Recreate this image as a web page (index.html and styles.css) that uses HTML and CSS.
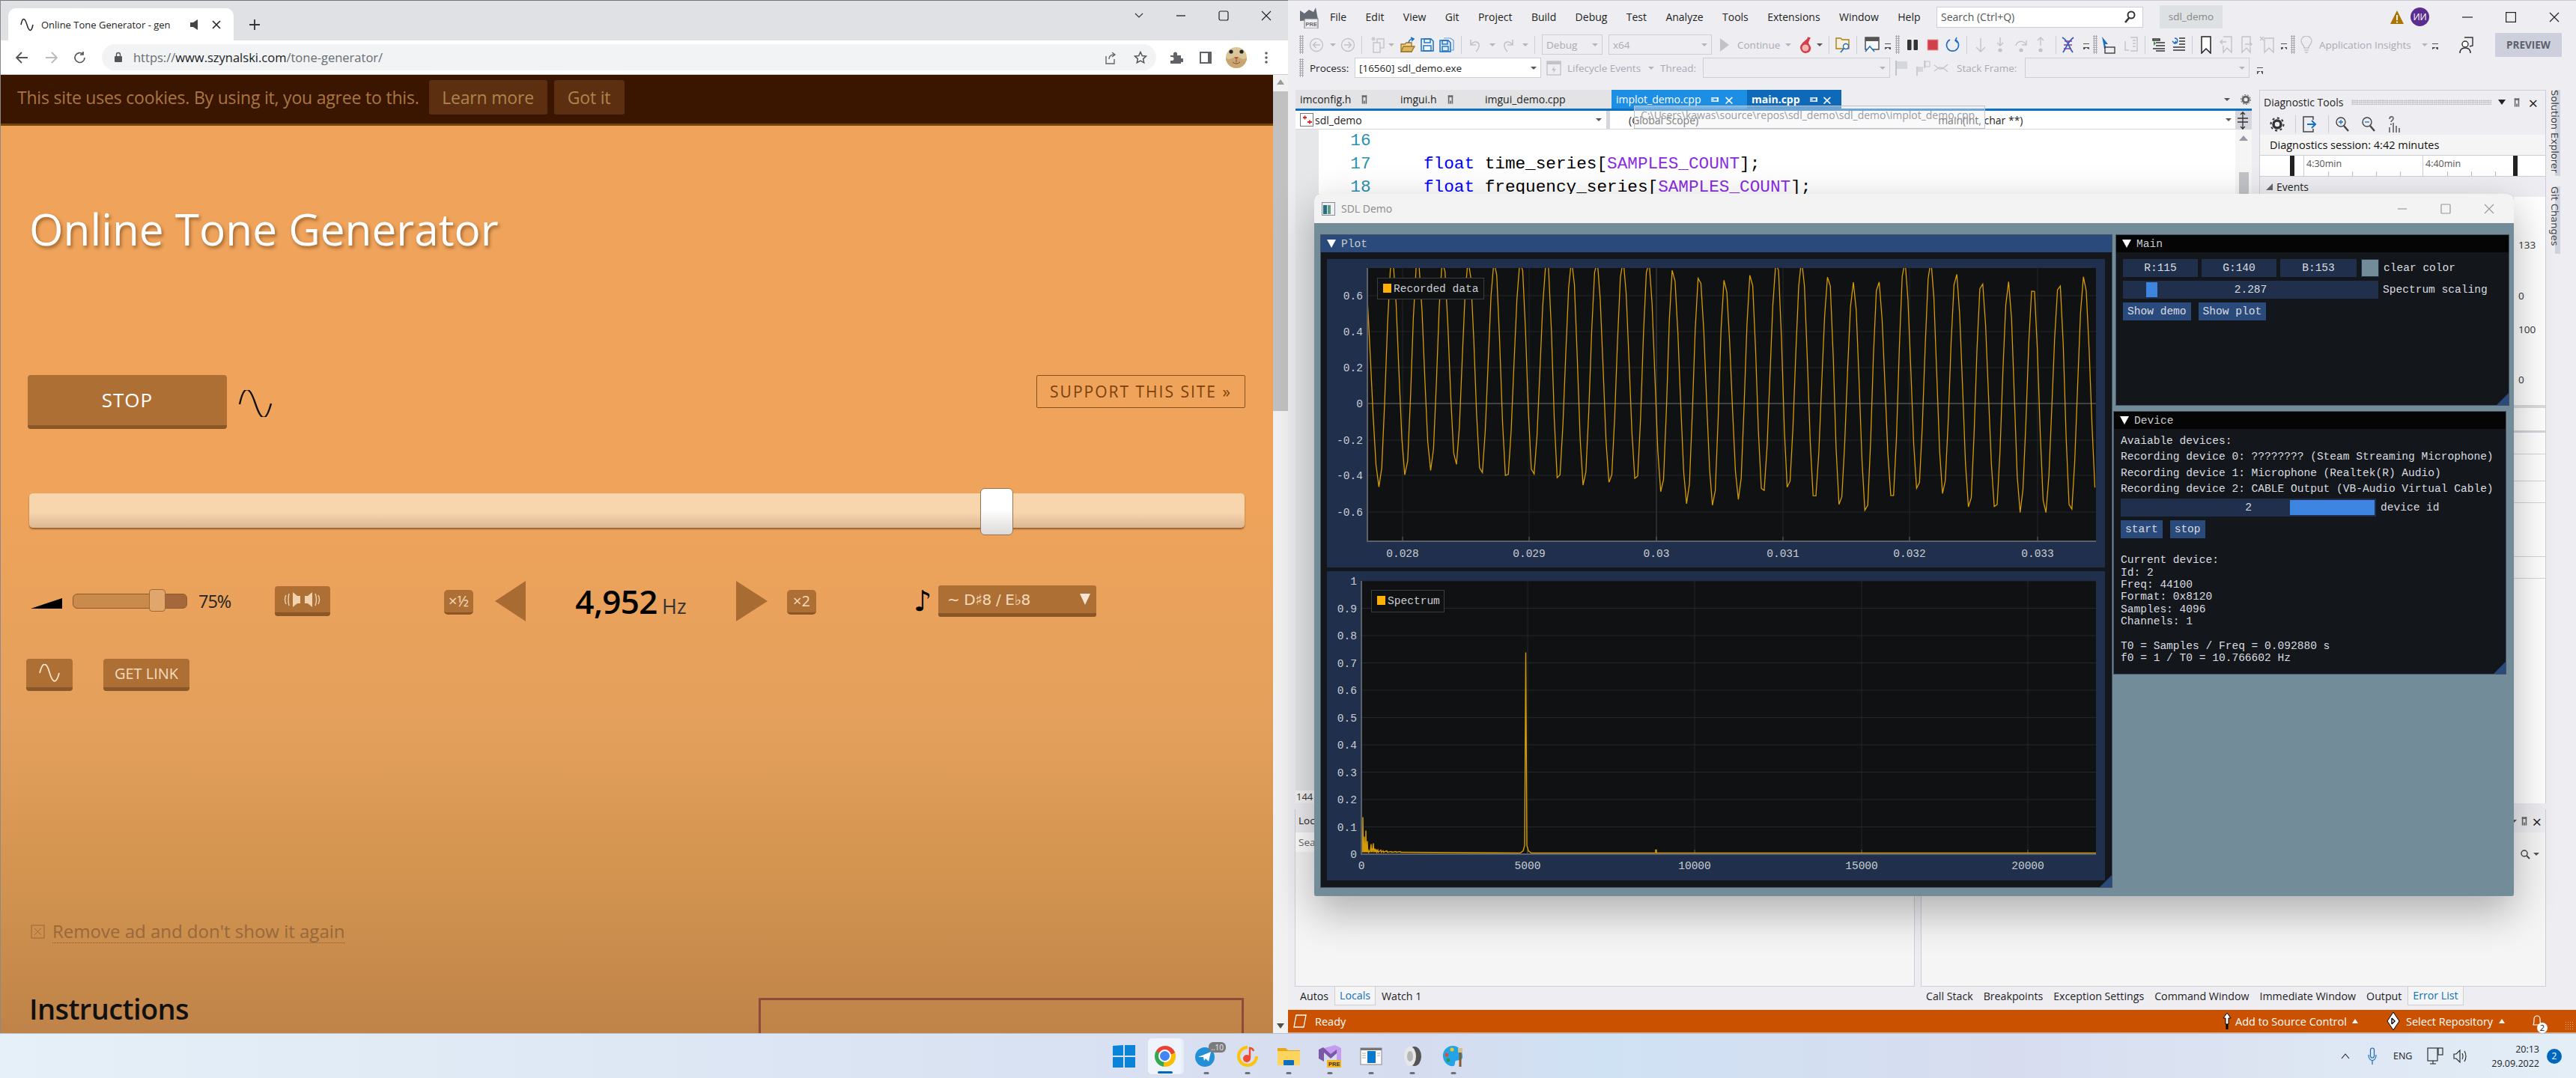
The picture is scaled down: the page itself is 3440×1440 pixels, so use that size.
FILE: index.html
```html
<!DOCTYPE html>
<html lang="en">
<head>
    <meta charset="UTF-8">
    <title>Tone generator and SDL demo</title>
    <link rel="stylesheet" href="styles.css">
</head>
<body>

<div class="windows">

    <!-- browser -->
    <section class="chrome">
        <div class="tabstrip">
            <div class="tab">
                <svg width="18" height="20" viewBox="0 0 18 20"><path d="M1 10C3 0 6 0 9 10S15 20 17 10" fill="none" stroke="#222" stroke-width="1.5"/></svg>
                <span class="tab-title">Online Tone Generator - gen</span>
                <svg class="tab-spk" width="14" height="16" viewBox="0 0 14 16"><path d="M1 5h4l6-4v14l-6-4H1z" fill="#444"/></svg>
                <svg class="tab-x" width="12" height="12" viewBox="0 0 12 12"><path d="M1 1l10 10M11 1L1 11" stroke="#222" stroke-width="1.6"/></svg>
            </div>
            <svg class="tab-new" width="14" height="14" viewBox="0 0 14 14"><path d="M7 0v14M0 7h14" stroke="#333" stroke-width="1.8"/></svg>
            <div class="winbtns">
                <svg width="12" height="10" viewBox="0 0 12 10"><path d="M1 2l5 5 5-5" fill="none" stroke="#333" stroke-width="1.2"/></svg>
                <svg width="14" height="14" viewBox="0 0 14 14"><path d="M1 7h12" stroke="#111" stroke-width="1.2"/></svg>
                <svg width="14" height="14" viewBox="0 0 14 14"><rect x="1" y="1" width="12" height="12" rx="2" fill="none" stroke="#222" stroke-width="1.2"/></svg>
                <svg width="14" height="14" viewBox="0 0 14 14"><path d="M1 1l12 12M13 1L1 13" stroke="#222" stroke-width="1.1"/></svg>
            </div>
        </div>
        <div class="addressbar">
            <svg width="18" height="16" viewBox="0 0 18 16"><path d="M17 8H3M9 1L2 8l7 7" fill="none" stroke="#555" stroke-width="1.8"/></svg>
            <svg class="ab-fwd" width="18" height="16" viewBox="0 0 18 16"><path d="M1 8h14M9 1l7 7-7 7" fill="none" stroke="#bbb" stroke-width="1.8"/></svg>
            <svg class="ab-reload" width="18" height="18" viewBox="0 0 18 18"><path d="M15 9a6.500 6.500 0 1 1-2-4.700M13 1v4h-4" fill="none" stroke="#555" stroke-width="1.7"/></svg>
            <div class="omnibox">
                <svg width="12" height="15" viewBox="0 0 12 15"><rect x="1" y="6" width="10" height="8" rx="1" fill="#555"/><path d="M3.500 6V4a2.500 2.500 0 0 1 5 0v2" fill="none" stroke="#555" stroke-width="1.4"/></svg>
                <span class="url"><span class="url-dim">https://</span>www.szynalski.com<span class="url-dim">/tone-generator/</span></span>
                <svg class="om-share" width="18" height="18" viewBox="0 0 18 18"><path d="M3 7v10h11V11M7 11c0-4 3-6 7-6M11 2l4 3-4 3" fill="none" stroke="#666" stroke-width="1.4"/></svg>
                <svg class="om-star" width="18" height="18" viewBox="0 0 18 18"><path d="M9 1.500l2.300 5 5.200.6-3.900 3.500 1.100 5.200L9 13.200l-4.700 2.600 1.100-5.200L1.500 7.100l5.200-.6z" fill="none" stroke="#555" stroke-width="1.5"/></svg>
            </div>
            <svg class="ab-ext" width="18" height="18" viewBox="0 0 18 18"><path d="M1 6h4V4a2.500 2.500 0 0 1 5 0v2h5v4h2a2.500 2.500 0 0 1 0 5h-2v2H1v-4h2a2.500 2.500 0 0 0 0-5H1z" fill="#5f6368"/></svg>
            <svg class="ab-side" width="18" height="18" viewBox="0 0 18 18"><rect x="1" y="1" width="16" height="16" fill="#5f6368"/><rect x="3" y="3" width="9" height="12" fill="#fff"/></svg>
            <svg class="ab-avatar" width="28" height="28" viewBox="0 0 28 28"><circle cx="14" cy="14" r="14" fill="#dcc598"/><path d="M0 14a14 14 0 0 0 28 0c-5 5-9-1-14-1S5 19 0 14z" fill="#c7a66f"/><circle cx="7" cy="6" r="2.600" fill="#1c2530"/><circle cx="21" cy="6" r="2.600" fill="#1c2530"/><path d="M11 13h6l-3 4z" fill="#b8574e"/><path d="M14 17v3M9 20q5 4 10 0" fill="none" stroke="#8a4a3c"/></svg>
            <svg class="ab-dots" width="6" height="18" viewBox="0 0 6 18"><circle cx="3" cy="3" r="1.800" fill="#5f6368"/><circle cx="3" cy="9" r="1.800" fill="#5f6368"/><circle cx="3" cy="15" r="1.800" fill="#5f6368"/></svg>
        </div>

        <div class="viewport">
            <main class="site">
                <div class="cookies">
                    <span>This site uses cookies. By using it, you agree to this.</span>
                    <a class="cookie-btn cb-learn">Learn more</a>
                    <a class="cookie-btn cb-got">Got it</a>
                </div>
                <h1 class="site-title">Online Tone Generator</h1>

                <div class="row-play">
                    <button class="bbtn stop">STOP</button>
                    <svg class="wave-icon" width="46" height="36" viewBox="0 0 46 36"><path d="M2 19C8-8 15-6 23 18S37 44 44 18" fill="none" stroke="#111" stroke-width="2.400"/></svg>
                    <a class="support">SUPPORT THIS SITE »</a>
                </div>

                <div class="freq-slider"><div class="freq-thumb"></div></div>

                <div class="row-controls">
                    <svg class="vol-ramp" width="42" height="14" viewBox="0 0 42 14"><path d="M0 14L42 0v14z" fill="#000"/></svg>
                    <div class="vol-slider"><div class="vol-thumb"></div></div>
                    <span class="vol-pct">75%</span>
                    <button class="bbtn mute">
                        <svg width="50" height="24" viewBox="0 0 50 24"><path d="M3 6q-3 6 0 12M7 4q-2 8 0 16" fill="none" stroke="#f0d2ae" stroke-width="1.400"/><path d="M22 7h-4l-6-5v20l6-5h4z" fill="#f0d2ae"/><path d="M28 7h4l6-5v20l-6-5h-4z" fill="#f0d2ae"/><path d="M42 4q3 8 0 16M46 6q3 6 0 12" fill="none" stroke="#f0d2ae" stroke-width="1.400"/></svg>
                    </button>
                    <button class="bbtn tiny half">×½</button>
                    <svg class="tri-left" width="41" height="54" viewBox="0 0 41 54"><path d="M41 0v54L0 27z" fill="#a86c33"/></svg>
                    <div class="freq-value"><b>4,952</b> <span>Hz</span></div>
                    <svg class="tri-right" width="42" height="54" viewBox="0 0 42 54"><path d="M0 0v54l42-27z" fill="#a86c33"/></svg>
                    <button class="bbtn tiny dbl">×2</button>
                    <span class="note-icon">♪</span>
                    <div class="bbtn note-select"><span>~ D♯8 / E♭8</span><i class="sel-arrow"></i></div>
                </div>

                <div class="row-tools">
                    <button class="bbtn tool-wave">
                        <svg width="30" height="24" viewBox="0 0 30 24"><path d="M2 12C6-4 11-3 15 11S24 28 28 12" fill="none" stroke="#fbe3c6" stroke-width="1.800"/></svg>
                    </button>
                    <button class="bbtn tool-link">GET LINK</button>
                </div>

                <div class="remove-ad">
                    <svg width="19" height="19" viewBox="0 0 19 19"><rect x="1" y="1" width="17" height="17" fill="none" stroke="#96683b"/><path d="M5 5l9 9M14 5l-9 9" stroke="#96683b"/></svg>
                    <span>Remove ad and don't show it again</span>
                </div>

                <div class="row-instr">
                    <h2>Instructions</h2>
                    <div class="ad-box"></div>
                </div>
            </main>
            <div class="scrollbar">
                <i class="sb-up"></i>
                <div class="sb-thumb"></div>
                <i class="sb-down"></i>
            </div>
        </div>
    </section>

    <!-- visual studio -->
    <section class="vs">
        <div class="vs-menu">
            <svg class="vs-logo" width="26" height="30" viewBox="0 0 26 30"><path d="M1 20V6l6 4 6-5 6 3 3-6 3 16z" fill="#656a75"/><rect x="7" y="17" width="18" height="13" fill="#eeeef2" stroke="#777"/><text x="8.500" y="27" font-size="7.500" font-family="Liberation Sans, sans-serif" font-weight="700" fill="#666">PRE</text></svg>
            <nav class="menu-items">
                <span>File</span><span>Edit</span><span>View</span><span>Git</span><span>Project</span><span>Build</span><span>Debug</span><span>Test</span><span>Analyze</span><span>Tools</span><span>Extensions</span><span>Window</span><span>Help</span>
            </nav>
            <div class="vs-search">
                <span>Search (Ctrl+Q)</span>
                <svg width="18" height="18" viewBox="0 0 18 18"><circle cx="11" cy="6" r="4.500" fill="none" stroke="#333" stroke-width="2"/><path d="M8 10l-5 6" stroke="#333" stroke-width="2.600"/></svg>
            </div>
            <div class="vs-project">sdl_demo</div>
            <svg class="vs-warn" width="18" height="18" viewBox="0 0 18 18"><path d="M9 0l9 18H0z" fill="#a97500"/><path d="M9 6v7M9 14.500v2" stroke="#fff" stroke-width="1.800"/></svg>
            <div class="vs-avatar">ИИ</div>
            <div class="vs-winbtns">
                <svg width="14" height="14" viewBox="0 0 14 14"><path d="M0 7h14" stroke="#222" stroke-width="1.200"/></svg>
                <svg width="14" height="14" viewBox="0 0 14 14"><rect x=".6" y=".6" width="12.800" height="12.800" fill="none" stroke="#222" stroke-width="1.200"/></svg>
                <svg width="14" height="14" viewBox="0 0 14 14"><path d="M1 1l12 12M13 1L1 13" stroke="#222" stroke-width="1.200"/></svg>
            </div>
        </div>

        <div class="tb tb-one">
            <i class="grip"></i>
            <svg class="m7" width="20" height="20" viewBox="0 0 20 20"><circle cx="10" cy="10" r="8.500" fill="none" stroke="#c2c3c9" stroke-width="1.400"/><path d="M15 10H6M9.500 6L5.500 10l4 4" fill="none" stroke="#c2c3c9" stroke-width="1.400"/></svg>
            <i class="caret m8"></i>
            <svg class="m6" width="20" height="20" viewBox="0 0 20 20"><circle cx="10" cy="10" r="8.500" fill="none" stroke="#c2c3c9" stroke-width="1.400"/><path d="M5 10h9M10.500 6l4 4-4 4" fill="none" stroke="#c2c3c9" stroke-width="1.400"/></svg>
            <i class="sep m8"></i>
            <svg class="m11" width="20" height="24" viewBox="0 0 20 24"><path d="M4 1v6M1 4h6M2 2l4 4M6 2L2 6" stroke="#c2c3c9"/><rect x="9" y="4" width="9" height="12" fill="none" stroke="#c2c3c9" stroke-width="1.400"/><rect x="4" y="9" width="9" height="13" fill="#eeeef2" stroke="#c2c3c9" stroke-width="1.400"/></svg>
            <i class="caret m4"></i>
            <svg class="m8" width="20" height="22" viewBox="0 0 20 22"><path d="M1 10h5l2-2h7v12H1z" fill="#f2d58e" stroke="#9d7424" stroke-width="1.300"/><path d="M1 20l3-7h15l-4 7z" fill="#dcb660" stroke="#9d7424" stroke-width="1.300"/><path d="M11 8q1-5 6-5M14 1l4 2-3 3" fill="none" stroke="#1c6ebf" stroke-width="1.500"/></svg>
            <svg class="m6" width="20" height="20" viewBox="0 0 20 20"><path d="M2 2h13l3 3v13H2z" fill="#eef3fa" stroke="#1b6fc2" stroke-width="1.500"/><rect x="6" y="2" width="8" height="5" fill="none" stroke="#1b6fc2" stroke-width="1.400"/><rect x="5" y="11" width="10" height="7" fill="none" stroke="#1b6fc2" stroke-width="1.400"/></svg>
            <svg class="m6" width="20" height="20" viewBox="0 0 20 20"><path d="M6 1h9l4 3v13h-3" fill="none" stroke="#6a9cd8" stroke-width="1.200"/><path d="M1 4h11l3 3v12H1z" fill="#dde9f7" stroke="#1b6fc2" stroke-width="1.500"/><rect x="4" y="4" width="7" height="5" fill="none" stroke="#1b6fc2" stroke-width="1.400"/><rect x="4" y="12" width="8" height="6" fill="none" stroke="#1b6fc2" stroke-width="1.400"/></svg>
            <i class="sep m9"></i>
            <svg class="m8" width="20" height="20" viewBox="0 0 20 20"><path d="M4 3v7h7M4.500 10C8 4 16 5 15 12c-.4 3-2 5-4 7" fill="none" stroke="#c2c3c9" stroke-width="1.600"/></svg>
            <i class="caret m9"></i>
            <svg class="m7" width="20" height="20" viewBox="0 0 20 20"><path d="M16 3v7H9M15.500 10C12 4 4 5 5 12c.4 3 2 5 4 7" fill="none" stroke="#c2c3c9" stroke-width="1.600"/></svg>
            <i class="caret m9"></i>
            <i class="sep m8"></i>
            <div class="combo cb-debug m9"><span>Debug</span><i class="caret"></i></div>
            <div class="combo cb-x64 m8"><span>x64</span><i class="caret"></i></div>
            <svg class="m10" width="14" height="20" viewBox="0 0 14 20"><path d="M1 1v18l12-9z" fill="#c2c3c9"/></svg>
            <span class="tb-txt dim w58 m10">Continue</span>
            <i class="caret m6"></i>
            <svg class="m9" width="20" height="24" viewBox="0 0 20 24"><path d="M13 1c1 4-9 7-10 14 0 4 3 8 7 8s8-3 7-8c-1-3-2-3-3-6 1-3 2-5 3-7-2 0-3 0-4-1z" fill="#d13f4a"/><circle cx="10" cy="16" r="4.500" fill="#f6b5b0"/></svg>
            <i class="caret dark m5"></i>
            <i class="sep m8"></i>
            <svg class="m8" width="20" height="22" viewBox="0 0 20 22"><path d="M1 2h6l2 2h9v12H1z" fill="#f7f0dd" stroke="#a97a1a" stroke-width="1.400"/><circle cx="14" cy="13" r="3.500" fill="#fff" stroke="#1b6fc2" stroke-width="1.400"/><path d="M11 16l-4 5" stroke="#1b6fc2" stroke-width="1.600"/></svg>
            <i class="sep m8"></i>
            <svg class="m10" width="20" height="22" viewBox="0 0 20 22"><rect x="1" y="1" width="18" height="16" fill="#f8f8f8" stroke="#444" stroke-width="1.400"/><rect x="1" y="1" width="18" height="5" fill="#555"/><path d="M1 20l6-7 6 7" fill="#fff" stroke="#1b6fc2" stroke-width="1.500"/></svg>
            <i class="overflow m7"></i>
            <i class="grip m6"></i>
            <svg class="m7" width="20" height="20" viewBox="0 0 20 20"><rect x="3" y="3" width="5.500" height="14" rx="1" fill="#333"/><rect x="11.500" y="3" width="5.500" height="14" rx="1" fill="#333"/></svg>
            <svg class="m7" width="20" height="20" viewBox="0 0 20 20"><rect x="3" y="3" width="14" height="14" fill="#d13f4a" stroke="#e79aa0"/></svg>
            <svg class="m7" width="20" height="22" viewBox="0 0 20 22"><path d="M13 4a8 8 0 1 1-7 0" fill="none" stroke="#1b6fc2" stroke-width="1.700"/><path d="M15 1l-2 4 3 3" fill="none" stroke="#1b6fc2" stroke-width="1.500"/></svg>
            <i class="sep m8"></i>
            <svg class="m8" width="20" height="22" viewBox="0 0 20 22"><path d="M10 2v18M4 14l6 6 6-6" fill="none" stroke="#c2c3c9" stroke-width="1.400"/></svg>
            <svg class="m6" width="20" height="22" viewBox="0 0 20 22"><path d="M10 1v11M6 8l4 4 4-4" fill="none" stroke="#c2c3c9" stroke-width="1.400"/><circle cx="10" cy="18" r="2.600" fill="#c2c3c9"/></svg>
            <svg class="m8" width="20" height="22" viewBox="0 0 20 22"><path d="M3 12a7 7 0 0 1 13-2M17 5v6h-6" fill="none" stroke="#c2c3c9" stroke-width="1.400"/><circle cx="10" cy="18" r="2.600" fill="#c2c3c9"/></svg>
            <svg class="m6" width="20" height="22" viewBox="0 0 20 22"><path d="M10 12V1M6 5l4-4 4 4" fill="none" stroke="#c2c3c9" stroke-width="1.400"/><circle cx="10" cy="18" r="2.600" fill="#c2c3c9"/></svg>
            <i class="sep m10"></i>
            <svg class="m6" width="20" height="24" viewBox="0 0 20 24"><path d="M2 2c8 4 8 12 14 20M17 2C10 7 8 14 3 22" fill="none" stroke="#2f5fb5" stroke-width="1.800"/><path d="M5 7h10M4 12h11M4 17h10" stroke="#7a3fb0" stroke-width="1.400"/></svg>
            <i class="overflow m10"></i>
            <i class="grip m5"></i>
            <svg class="m4" width="20" height="24" viewBox="0 0 20 24"><path d="M2 1l8 10-4 0 2 6-3 0-1-6z" fill="#1b6fc2"/><rect x="6" y="15" width="13" height="8" fill="#eee" stroke="#333" stroke-width="1.300"/></svg>
            <svg class="m11" width="20" height="22" viewBox="0 0 20 22"><path d="M9 1h9v18h-9M2 6v12h5M12 5h4M12 9h4M12 13h4" fill="none" stroke="#c2c3c9" stroke-width="1.400"/></svg>
            <i class="sep m8"></i>
            <svg class="m9" width="20" height="20" viewBox="0 0 20 20"><path d="M1 2h9v2H1zM5 7h12M5 11h12M1 15h16M5 18h12" fill="none" stroke="#333" stroke-width="1.500"/><path d="M2 5l3 3-3 3" fill="#2a8c3c"/></svg>
            <svg class="m5" width="20" height="22" viewBox="0 0 20 22"><path d="M11 2h8M11 6h8M11 10h8M3 14h16M3 18h16" stroke="#333" stroke-width="1.500"/><path d="M5 2c5 0 5 7 0 7l2-3M5 9L2 6" fill="none" stroke="#1b6fc2" stroke-width="1.500"/></svg>
            <i class="sep m8"></i>
            <svg class="m8" width="20" height="24" viewBox="0 0 20 24"><path d="M4 1h12v22l-6-6-6 6z" fill="#fff" stroke="#222" stroke-width="1.500"/></svg>
            <svg class="m7" width="20" height="24" viewBox="0 0 20 24"><path d="M6 1h11v21l-6-6-5 6V13M2 8h8M5 5L2 8l3 3" fill="none" stroke="#c2c3c9" stroke-width="1.400"/></svg>
            <svg class="m7" width="20" height="24" viewBox="0 0 20 24"><path d="M4 1h11v10M15 15v7l-5-6-6 6V1M8 11h9M14 8l3 3-3 3" fill="none" stroke="#c2c3c9" stroke-width="1.400"/></svg>
            <svg class="m7" width="20" height="24" viewBox="0 0 20 24"><path d="M7 3h12v19l-6-6-6 6zM1 1l5 5M6 1L1 6" fill="none" stroke="#c2c3c9" stroke-width="1.400"/></svg>
            <i class="overflow m9"></i>
            <i class="grip m5"></i>
            <svg class="m7" width="16" height="24" viewBox="0 0 16 24"><path d="M5 16c0-4-4-5-4-9a7 7 0 0 1 14 0c0 4-4 5-4 9zM5 19h6M6 22h4" fill="none" stroke="#c2c3c9" stroke-width="1.400"/></svg>
            <span class="tb-txt dim w131 m9">Application Insights</span>
            <i class="caret m6"></i>
            <i class="overflow m6"></i>
            <svg class="m27" width="20" height="24" viewBox="0 0 20 24"><circle cx="9" cy="11" r="4" fill="#fff" stroke="#333" stroke-width="1.400"/><path d="M2 23c0-5 3-7 7-7s7 2 7 7" fill="none" stroke="#333" stroke-width="1.500"/><path d="M8 2h11v11l-4 1" fill="none" stroke="#333" stroke-width="1.400"/></svg>
            <div class="preview m29">PREVIEW</div>
        </div>

        <div class="tb tb-two">
            <i class="grip"></i>
            <span class="tb-txt w52 m8">Process:</span>
            <div class="combo cb-process m8"><span>[16560] sdl_demo.exe</span><i class="caret dark"></i></div>
            <svg class="m7" width="20" height="20" viewBox="0 0 20 20"><rect x="1" y="1" width="18" height="18" fill="none" stroke="#c2c3c9" stroke-width="1.400"/><rect x="1" y="1" width="18" height="4" fill="#c2c3c9"/><path d="M11 7l-4 6h3l-1 4 4-6h-3z" fill="#c2c3c9"/></svg>
            <span class="tb-txt dim w102 m8">Lifecycle Events</span>
            <i class="caret m6"></i>
            <span class="tb-txt dim w49 m8">Thread:</span>
            <div class="combo cb-thread m8"><i class="caret"></i></div>
            <svg class="m6" width="20" height="22" viewBox="0 0 20 22"><path d="M2 1v20" stroke="#c2c3c9" stroke-width="2"/><path d="M3 2h14v10H3z" fill="#d6d7dc"/></svg>
            <svg class="m8" width="20" height="22" viewBox="0 0 20 22"><path d="M2 9v12M12 1v10" stroke="#c2c3c9" stroke-width="1.600"/><rect x="3" y="9" width="7" height="7" fill="#d6d7dc"/><rect x="13" y="2" width="6" height="7" fill="none" stroke="#c2c3c9"/></svg>
            <svg class="m4" width="20" height="22" viewBox="0 0 20 22"><path d="M1 7l7 5q4 1 11-6M1 15l7-5q4-1 11 6" fill="none" stroke="#c2c3c9" stroke-width="1.300"/></svg>
            <span class="tb-txt dim w83 m11">Stack Frame:</span>
            <div class="combo cb-frame m8"><i class="caret"></i></div>
            <i class="overflow low m10"></i>
        </div>

        <div class="vs-main">
            <div class="vs-panes">
                <div class="vs-top">

                    <div class="editor">
                        <div class="doc-tabs">
                            <div class="doc-tab dt-a">imconfig.h<i class="pin"></i></div>
                            <div class="doc-tab dt-b">imgui.h<i class="pin"></i></div>
                            <div class="doc-tab dt-c">imgui_demo.cpp</div>
                            <div class="doc-tab dt-open">implot_demo.cpp<i class="pin white"></i><b class="xmark">×</b></div>
                            <div class="doc-tab dt-main"><strong>main.cpp</strong><i class="pin white"></i><b class="xmark">×</b></div>
                            <div class="doc-tail">
                                <i class="caret dark"></i>
                                <svg width="14" height="14" viewBox="0 0 14 14"><circle cx="7" cy="7" r="4" fill="none" stroke="#666" stroke-width="3"/><circle cx="7" cy="7" r="6.500" fill="none" stroke="#666" stroke-dasharray="2 2"/></svg>
                            </div>
                        </div>
                        <div class="nav-bar">
                            <div class="nav-drop nd-project">
                                <svg width="18" height="18" viewBox="0 0 18 18"><rect x=".5" y=".5" width="17" height="17" fill="#fff" stroke="#777"/><path d="M4 6h5M6.500 3.500v5M10 12h6M13 9.500v5" stroke="#d03030" stroke-width="1.800"/></svg>
                                <span>sdl_demo</span>
                                <i class="caret dark"></i>
                            </div>
                            <div class="nav-drop nd-scope">
                                <span>(Global Scope)</span>
                                <span class="nd-fn">main(int, char **)</span>
                                <i class="caret dark"></i>
                            </div>
                            <svg class="nav-split" width="16" height="26" viewBox="0 0 16 26"><path d="M8 1v24M1 10h14M1 15h14M5 5l3-3 3 3M5 21l3 3 3-3" fill="none" stroke="#333" stroke-width="1.300"/></svg>
                        </div>
                        <div class="code-pane">
                            <div class="code-margin"></div>
                            <div class="code">
                                <div class="ln"><span class="no">16</span></div>
                                <div class="ln"><span class="no">17</span>    <span class="kw">float</span> time_series[<span class="mac">SAMPLES_COUNT</span>];</div>
                                <div class="ln"><span class="no">18</span>    <span class="kw">float</span> frequency_series[<span class="mac">SAMPLES_COUNT</span>];</div>
                            </div>
                            <div class="code-scroll"><i class="up-arrow"></i><div class="code-thumb"></div></div>
                        </div>
                        <div class="zoom-strip">144 %</div>
                    </div>

                    <aside class="diag">
                        <div class="diag-head">
                            <span>Diagnostic Tools</span>
                            <i class="dots"></i>
                            <i class="caret dark big"></i>
                            <i class="pin"></i>
                            <b class="xmark dark">×</b>
                        </div>
                        <div class="diag-tools">
                            <svg width="20" height="20" viewBox="0 0 20 20"><circle cx="10" cy="10" r="5" fill="none" stroke="#333" stroke-width="3.500"/><circle cx="10" cy="10" r="8.500" fill="none" stroke="#333" stroke-width="2" stroke-dasharray="3 3.600"/></svg>
                            <i class="sep"></i>
                            <svg width="20" height="24" viewBox="0 0 20 24"><path d="M15 6V2H2v20h13v-4" fill="none" stroke="#444" stroke-width="1.500"/><path d="M7 12h11M13 7l5 5-5 5" fill="none" stroke="#1b6fc2" stroke-width="2"/></svg>
                            <i class="sep"></i>
                            <svg width="20" height="22" viewBox="0 0 20 22"><circle cx="8" cy="8" r="6" fill="none" stroke="#444" stroke-width="1.400"/><path d="M12 13l6 7" stroke="#444" stroke-width="2.400"/><path d="M5 8h6M8 5v6" stroke="#1b6fc2" stroke-width="1.300"/></svg>
                            <svg width="20" height="22" viewBox="0 0 20 22"><circle cx="8" cy="8" r="6" fill="none" stroke="#444" stroke-width="1.400"/><path d="M12 13l6 7" stroke="#444" stroke-width="2.400"/><path d="M5 8h6" stroke="#1b6fc2" stroke-width="1.300"/></svg>
                            <svg width="18" height="24" viewBox="0 0 18 24"><path d="M3 5c0-4 5-4 5-1s-3 3-3 5M5 11v2M3 23v-7M8 23V10M12 23v-9M16 23v-6" fill="none" stroke="#666" stroke-width="1.700"/></svg>
                        </div>
                        <div class="diag-session">Diagnostics session: 4:42 minutes</div>
                        <div class="diag-ruler">
                            <i class="rbar"></i>
                            <div class="rmark rm-a">4:30min</div>
                            <div class="rmark rm-b">4:40min</div>
                            <i class="rbar"></i>
                        </div>
                        <div class="diag-events"><i class="tri-open"></i>Events</div>
                        <div class="diag-scale">
                            <div class="sc-a">133</div>
                            <div class="sc-b">0</div>
                            <div class="sc-c">100</div>
                            <div class="sc-d">0</div>
                            <div class="sc-line thick"></div>
                            <div class="sc-line l1"></div>
                            <div class="sc-line l2"></div>
                            <div class="sc-line l3"></div>
                            <div class="sc-line l4"></div>
                            <div class="sc-line l5"></div>
                            <div class="sc-line l6"></div>
                        </div>
                    </aside>
                </div>

                <div class="dock">
                    <div class="dock-col dock-left">
                        <div class="dock-pane">
                            <div class="dock-head">Locals</div>
                            <div class="dock-search">Search (Ctrl+E)</div>
                        </div>
                        <div class="dock-tabs">
                            <span>Autos</span>
                            <span class="active">Locals</span>
                            <span>Watch 1</span>
                        </div>
                    </div>
                    <div class="dock-col dock-right">
                        <div class="dock-pane">
                            <div class="dock-icons">
                                <i class="caret dark"></i><i class="pin"></i><b class="xmark dark">×</b>
                            </div>
                            <div class="dock-find">
                                <svg width="14" height="14" viewBox="0 0 14 14"><circle cx="6" cy="6" r="4" fill="none" stroke="#444" stroke-width="1.400"/><path d="M9 9l4 4" stroke="#444" stroke-width="1.800"/></svg>
                                <i class="caret dark"></i>
                            </div>
                        </div>
                        <div class="dock-tabs">
                            <span>Call Stack</span>
                            <span>Breakpoints</span>
                            <span>Exception Settings</span>
                            <span>Command Window</span>
                            <span>Immediate Window</span>
                            <span>Output</span>
                            <span class="active">Error List</span>
                        </div>
                    </div>
                </div>
            </div>
            <div class="side-tabs">
                <div class="side-tab st-a">Solution Explorer</div>
                <div class="side-tab st-b">Git Changes</div>
            </div>
        </div>

        <footer class="statusbar">
            <svg width="18" height="20" viewBox="0 0 18 20"><path d="M4 2h13l-3 16H1z" fill="none" stroke="#fff" stroke-width="1.300"/></svg>
            <span class="st-ready">Ready</span>
            <div class="st-right">
                <svg width="12" height="24" viewBox="0 0 12 24"><path d="M6 1l5 7H8v8H4V8H1z" fill="#fff" stroke="#000"/><path d="M6 16v7" stroke="#000" stroke-width="3"/></svg>
                <span class="st-a1">Add to Source Control</span>
                <i class="up-caret"></i>
                <svg class="st-dia" width="18" height="26" viewBox="0 0 18 26"><path d="M9 1l8 12-8 12-8-12z" fill="#fff" stroke="#000"/><path d="M7 9v8M7 9l4 4-4 4" fill="none" stroke="#000" stroke-width="1.400"/></svg>
                <span class="st-a2">Select Repository</span>
                <i class="up-caret"></i>
                <div class="st-bell">
                    <svg width="14" height="22" viewBox="0 0 14 22"><path d="M2 16c1-2 1-5 1-8a4 4 0 0 1 8 0c0 3 0 6 1 8z" fill="none" stroke="#fff" stroke-width="1.200"/></svg>
                    <b>2</b>
                </div>
                <i class="resize-grip"></i>
            </div>
        </footer>
    </section>
</div>

<!-- taskbar -->
<footer class="taskbar">
    <div class="task-icons">
        <div class="task-slot">
            <svg width="30" height="30" viewBox="0 0 30 30"><path d="M0 1l14-1v14H0zM16 0l14 0v14H16zM0 16h14v14H0zM16 16h14v14H16z" fill="#0a84d8"/></svg>
        </div>
        <div class="task-slot on">
            <div class="chrome-logo"><i></i></div>
            <u class="task-bar"></u>
        </div>
        <div class="task-slot">
            <svg width="30" height="28" viewBox="0 0 30 28"><circle cx="13" cy="15" r="13" fill="#2290d6"/><path d="M4 15l17-7-3 13-4-4-2 3-1-5z" fill="#fff"/></svg>
            <span class="tg-badge">..10</span>
            <u class="task-dot"></u>
        </div>
        <div class="task-slot">
            <svg width="30" height="30" viewBox="0 0 30 30"><path d="M15 3a12 12 0 1 0 12 12" fill="none" stroke="#fcc30b" stroke-width="4"/><circle cx="14" cy="18" r="5" fill="#ef4b32"/><path d="M18 18V4q4 0 5 4" fill="none" stroke="#ef4b32" stroke-width="2.400"/></svg>
            <u class="task-dot"></u>
        </div>
        <div class="task-slot">
            <svg width="30" height="28" viewBox="0 0 30 28"><path d="M0 3h11l3 3h16v20H0z" fill="#e6a815"/><rect y="7" width="30" height="19" fill="#fdd45c"/><rect x="8" y="19" width="14" height="7" rx="1" fill="#0a6fc0"/></svg>
            <u class="task-dot"></u>
        </div>
        <div class="task-slot">
            <svg width="30" height="30" viewBox="0 0 30 30"><path d="M22 0l8 4v18h-6V7l-9 9-9-8-6 4V6z" fill="#c59cf0"/><path d="M0 6l6-3 10 9 8-6v5l-8 7-9-8v12l-7-4z" fill="#7c58a8"/><rect x="11" y="20" width="19" height="10" fill="#f5b61a"/><text x="13" y="28" font-size="7.500" font-weight="700" font-family="Liberation Sans, sans-serif" fill="#333">PRE</text></svg>
            <u class="task-dot"></u>
        </div>
        <div class="task-slot">
            <svg width="30" height="24" viewBox="0 0 30 24"><rect x="1" y="1" width="28" height="22" fill="#fff" stroke="#888"/><rect x="1" y="1" width="28" height="3" fill="#777"/><rect x="10" y="5" width="11" height="16" fill="#0a78cc"/><path d="M3 8h5M3 11h5M3 14h5M23 8h4M23 11h4" stroke="#aaa"/></svg>
            <u class="task-dot"></u>
        </div>
        <div class="task-slot">
            <svg width="24" height="28" viewBox="0 0 24 28"><ellipse cx="15" cy="14" rx="9" ry="13" fill="#555"/><ellipse cx="9" cy="14" rx="8" ry="13" fill="#e5e7e8"/><ellipse cx="9" cy="14" rx="4" ry="7" fill="#b5b8ba"/></svg>
            <u class="task-dot"></u>
        </div>
        <div class="task-slot">
            <svg width="30" height="30" viewBox="0 0 30 30"><path d="M14 1C6 1 0 8 1 16s8 13 14 12c3-1 1-5 3-7 2-1 8 0 9-4C28 8 22 1 14 1z" fill="#22a5e8"/><circle cx="6" cy="13" r="2.500" fill="#e04c2c"/><circle cx="13" cy="6" r="2.500" fill="#f5c518"/><circle cx="8" cy="20" r="2.500" fill="#2c9a4a"/><path d="M24 10v19" stroke="#8a5a28" stroke-width="3"/><path d="M21 4h6v6h-6z" fill="#d8c090"/></svg>
            <u class="task-dot"></u>
        </div>
    </div>
    <div class="tray">
        <svg width="12" height="8" viewBox="0 0 12 8"><path d="M1 7l5-6 5 6" fill="none" stroke="#222" stroke-width="1.100"/></svg>
        <svg class="tr-mic" width="12" height="24" viewBox="0 0 12 24"><rect x="3.500" y="1" width="5" height="13" rx="2.500" fill="none" stroke="#1366b8" stroke-width="1.200"/><path d="M1 10c0 10 10 10 10 0M6 17v6" fill="none" stroke="#1366b8" stroke-width="1.200"/></svg>
        <span class="tr-lang">ENG</span>
        <svg class="tr-net" width="22" height="24" viewBox="0 0 22 24"><rect x="1" y="1" width="13" height="17" fill="none" stroke="#222" stroke-width="1.100"/><rect x="15" y="1" width="6" height="9" fill="none" stroke="#222" stroke-width="1.100"/><path d="M4 22h8M8 18v4" stroke="#222" stroke-width="1.100"/></svg>
        <svg class="tr-vol" width="20" height="22" viewBox="0 0 20 22"><path d="M1 8h3l5-5v16l-5-5H1z" fill="none" stroke="#222" stroke-width="1.100"/><path d="M12 7q2 4 0 8M15 4q4 7 0 14" fill="none" stroke="#222" stroke-width="1.100"/></svg>
        <div class="tr-clock"><span>20:13</span><span>29.09.2022</span></div>
        <b class="tr-badge">2</b>
    </div>
</footer>

<!-- tab path tooltip, half see-through over the navigation bar -->
<div class="path-tip">C:\Users\kawas\source\repos\sdl_demo\sdl_demo\implot_demo.cpp</div>

<!-- sdl window, floats over the IDE -->
<div class="sdl">
    <div class="sdl-title">
        <svg width="18" height="18" viewBox="0 0 18 18"><rect x=".5" y=".5" width="17" height="17" fill="#eef0f2" stroke="#889"/><rect x="2" y="4" width="5" height="12" fill="#2a6d7e"/><rect x="8" y="4" width="4" height="12" fill="#5e9c8a"/></svg>
        <span>SDL Demo</span>
        <div class="sdl-btns">
            <svg width="14" height="14" viewBox="0 0 14 14"><path d="M1 7h12" stroke="#999" stroke-width="1.200"/></svg>
            <svg width="14" height="14" viewBox="0 0 14 14"><rect x="1" y="1" width="12" height="12" rx="1" fill="none" stroke="#999" stroke-width="1.200"/></svg>
            <svg width="14" height="14" viewBox="0 0 14 14"><path d="M1 1l12 12M13 1L1 13" stroke="#999" stroke-width="1.100"/></svg>
        </div>
    </div>

    <div class="im-win plot-win">
        <div class="im-title plot-title"><i class="im-tri"></i>Plot</div>
        <div class="plot-body">
            <div class="plot-frame"><svg id="wavePlot" width="1039" height="412"></svg></div>
            <div class="plot-frame"><svg id="specPlot" width="1039" height="413"></svg></div>
        </div>
        <i class="im-grip"></i>
    </div>

    <div class="im-win main-win">
        <div class="im-title"><i class="im-tri"></i>Main</div>
        <div class="im-body">
            <div class="im-row">
                <div class="im-field f-r">R:115</div>
                <div class="im-field f-g">G:140</div>
                <div class="im-field f-b">B:153</div>
                <div class="im-swatch"></div>
                <span class="im-label">clear color</span>
            </div>
            <div class="im-row">
                <div class="im-field im-slider s-scale">2.287<i class="im-knob k-scale"></i></div>
                <span class="im-label">Spectrum scaling</span>
            </div>
            <div class="im-row">
                <button class="im-btn">Show demo</button>
                <button class="im-btn">Show plot</button>
            </div>
        </div>
        <i class="im-grip"></i>
    </div>

    <div class="im-win dev-win">
        <div class="im-title"><i class="im-tri"></i>Device</div>
        <div class="im-body dev-body">
            <div class="im-line">Avaiable devices:</div>
            <div class="im-line">Recording device 0: ???????? (Steam Streaming Microphone)</div>
            <div class="im-line">Recording device 1: Microphone (Realtek(R) Audio)</div>
            <div class="im-line">Recording device 2: CABLE Output (VB-Audio Virtual Cable)</div>
            <div class="im-row dev-slider-row">
                <div class="im-field im-slider s-dev">2<i class="im-knob k-dev"></i></div>
                <span class="im-label">device id</span>
            </div>
            <div class="im-row">
                <button class="im-btn">start</button>
                <button class="im-btn">stop</button>
            </div>
            <div class="im-info">Current device:
Id: 2
Freq: 44100
Format: 0x8120
Samples: 4096
Channels: 1

T0 = Samples / Freq = 0.092880 s
f0 = 1 / T0 = 10.766602 Hz</div>
        </div>
        <i class="im-grip"></i>
    </div>
</div>

<script src="plots.js"></script>
</body>
</html>
```

FILE: styles.css
```css
:root {
    --ui: "Open Sans", "Noto Sans", sans-serif;
    --mono: "Liberation Mono", monospace;
    --vs-bg: #eeeef2;
    --dim: #a9aab2;
    --btn: #ae6f35;
    --btn-dark: #8b5628;
    --im-blue: #294a7a;
    --im-frame: #20304c;
    --im-knob: #3d85e0;
    --im-text: #d9dce0;
}
* { box-sizing: border-box; }
html, body {
    margin: 0;
    width: 3440px;
    height: 1440px;
    overflow: hidden;
}
body {
    position: relative;
    font-family: var(--ui);
    background: #e2e9f5;
}
button { font-family: inherit; border: none; padding: 0; }
i, u { display: block; text-decoration: none; }
svg { display: block; flex: none; }

.windows { display: flex; height: 1380px; }

/* ---------- browser ---------- */
.chrome {
    width: 1720px;
    display: flex;
    flex-direction: column;
    border-left: 1px solid #8a8a8a;
    border-top: 1px solid #777;
}
.tabstrip {
    height: 53px;
    background: #dfe1e5;
    display: flex;
    align-items: flex-end;
    padding-left: 10px;
}
.tab {
    width: 301px;
    height: 43px;
    background: #fff;
    border-radius: 10px 10px 0 0;
    display: flex;
    align-items: center;
    padding: 0 14px 0 16px;
}
.tab-title {
    width: 176px;
    margin-left: 10px;
    font-size: 13px;
    color: #222;
    white-space: nowrap;
    overflow: hidden;
}
.tab-spk { margin-left: 22px; }
.tab-x { margin-left: 16px; }
.tab-new { margin: 0 0 14px 21px; }
.winbtns {
    margin-left: auto;
    align-self: flex-start;
    display: flex;
    align-items: center;
    height: 40px;
}
.winbtns svg { margin-right: 43px; }
.winbtns svg:last-child { margin-right: 22px; }
.addressbar {
    height: 46px;
    background: #fff;
    border-bottom: 1px solid #d0d1d4;
    display: flex;
    align-items: center;
    padding-left: 19px;
}
.ab-fwd { margin-left: 22px; }
.ab-reload { margin-left: 20px; }
.omnibox {
    width: 1408px;
    height: 35px;
    margin-left: 20px;
    background: #f1f3f4;
    border-radius: 18px;
    display: flex;
    align-items: center;
    padding-left: 16px;
}
.url { margin-left: 14px; font-size: 16.500px; color: #1d1d1f; }
.url-dim { color: #6a6d72; }
.om-share { margin-left: auto; }
.om-star { margin: 0 12px 0 22px; }
.ab-ext { margin-left: 18px; }
.ab-side { margin-left: 21px; }
.ab-avatar { margin-left: 18px; }
.ab-dots { margin-left: 23px; }

.viewport { flex: 1; display: flex; min-height: 0; }
.site {
    width: 1699px;
    overflow: hidden;
    background: linear-gradient(#efa35b 0, #efa35b 45%, #e3a05c 68%, #d1934f 85%, #bf8349 100%);
}
.cookies {
    height: 68px;
    background: #3a1500;
    border-bottom: 3px solid #784409;
    display: flex;
    align-items: center;
    padding: 0 0 6px 22px;
    font-size: 23px;
    color: #a87545;
    letter-spacing: -.2px;
}
.cookie-btn {
    height: 46px;
    line-height: 46px;
    background: #5c2f10;
    border-radius: 3px;
    color: #b0824f;
    text-align: center;
}
.cb-learn { width: 158px; margin-left: 13px; }
.cb-got { width: 94px; margin-left: 9px; }
.site-title {
    margin: 92px 0 0 38px;
    height: 90px;
    line-height: 90px;
    font-size: 58.500px;
    font-weight: 400;
    color: #fff;
    text-shadow: 2px 3px 4px rgba(90, 50, 10, .55);
}
.bbtn {
    background: var(--btn);
    border-bottom: 5px solid var(--btn-dark);
    border-radius: 4px;
    color: #f6dcbc;
    display: flex;
    align-items: center;
    justify-content: center;
}
.row-play {
    display: flex;
    align-items: flex-start;
    margin-top: 151px;
    padding: 0 37px 0 36px;
}
.stop {
    width: 266px;
    height: 72px;
    padding-bottom: 2px;
    font-size: 26px;
    color: #fff;
    letter-spacing: 1px;
}
.wave-icon { margin: 20px 0 0 15px; }
.support {
    margin-left: auto;
    width: 279px;
    height: 44px;
    line-height: 42px;
    border: 1px solid #8b4f1a;
    border-radius: 2px;
    color: #7a3f0a;
    font-size: 21px;
    text-align: center;
    letter-spacing: 2px;
    white-space: nowrap;
}
.freq-slider {
    position: relative;
    width: 1623px;
    height: 46px;
    margin: 86px 0 0 38px;
    border-radius: 5px;
    background: linear-gradient(#f7d6ae 55%, #dcb793);
    box-shadow: 0 2px 2px rgba(80, 40, 10, .55);
}
.freq-thumb {
    position: absolute;
    left: 1270px;
    top: -7px;
    width: 44px;
    height: 63px;
    border-radius: 6px;
    border: 1px solid #9a7450;
    background: linear-gradient(#fff 45%, #dcdad8);
}
.row-controls {
    display: flex;
    align-items: center;
    height: 54px;
    margin-top: 71px;
    padding-left: 40px;
}
.vol-ramp { margin-top: 6px; }
.vol-slider {
    position: relative;
    width: 153px;
    height: 20px;
    margin-left: 14px;
    border-radius: 6px;
    border: 1px solid #8c5a2e;
    background: linear-gradient(to right, #c98a4b 0, #c98a4b 68%, #a5683a 68%);
}
.vol-thumb {
    position: absolute;
    left: 101px;
    top: -7px;
    width: 22px;
    height: 30px;
    border-radius: 4px;
    background: #e0a66b;
    border: 1px solid #a06a36;
}
.vol-pct { margin-left: 15px; width: 49px; font-size: 23.500px; color: #222; letter-spacing: -1px; white-space: nowrap; }
.mute { width: 74px; height: 40px; margin-left: 53px; }
.tiny { height: 33px; width: 39px; font-size: 20px; border-bottom-width: 3px; border-radius: 5px; margin-top: 2px; }
.half { margin-left: 152px; }
.tri-left { margin-left: 29px; }
.freq-value { width: 281px; text-align: center; color: #000; white-space: nowrap; }
.freq-value b { font-size: 44px; font-weight: 600; letter-spacing: -.6px; }
.freq-value span { font-size: 27px; color: #333; margin-left: 2px; }
.dbl { margin-left: 26px; }
.note-icon {
    margin-left: 130px;
    width: 33px;
    font-family: "DejaVu Sans", sans-serif;
    font-size: 38px;
    line-height: 1;
    color: #000;
}
.note-select {
    width: 211px;
    height: 42px;
    justify-content: flex-start;
    padding-left: 12px;
    color: #f6dcbc;
    font-family: "DejaVu Sans", var(--ui);
    border-radius: 3px;
}
.note-select span { font-size: 20px; letter-spacing: -.4px; }
.sel-arrow {
    margin-left: auto;
    margin-right: 8px;
    border-left: 7px solid transparent;
    border-right: 7px solid transparent;
    border-top: 15px solid #f6e5d0;
}
.row-tools { display: flex; margin-top: 50px; padding-left: 34px; }
.tool-wave { width: 62px; height: 43px; }
.tool-link { width: 115px; height: 43px; margin-left: 41px; font-size: 20px; }
.remove-ad {
    display: flex;
    align-items: center;
    margin: 305px 0 0 40px;
    font-size: 24px;
    color: #96683b;
    height: 32px;
}
.remove-ad span {
    margin-left: 10px;
    border-bottom: 1px dotted #8b5a30;
    line-height: 31px;
}
.row-instr {
    display: flex;
    justify-content: space-between;
    margin-top: 60px;
    padding: 0 39px 0 38px;
}
.row-instr h2 {
    margin: 2px 0 0;
    font-size: 38px;
    font-weight: 600;
    letter-spacing: -.6px;
    color: #111;
    line-height: 50px;
}
.ad-box {
    width: 648px;
    height: 80px;
    margin-top: 13px;
    border: 3px solid #8c4c3c;
}
.scrollbar {
    width: 20px;
    background: #f1f1f1;
    display: flex;
    flex-direction: column;
    align-items: center;
}
.sb-up, .sb-down {
    margin: 6px 0;
    border-left: 5px solid transparent;
    border-right: 5px solid transparent;
}
.sb-up { border-bottom: 7px solid #9a9a9a; }
.sb-down { margin-top: auto; border-top: 7px solid #505050; }
.sb-thumb { width: 20px; height: 427px; margin-top: 3px; background: #c1c1c1; }

/* ---------- visual studio ---------- */
.vs {
    flex: 1;
    display: flex;
    flex-direction: column;
    background: var(--vs-bg);
    border-top: 1px solid #c8c9d2;
    font-size: 14px;
    color: #1e1e1e;
}
.vs-menu {
    height: 43px;
    display: flex;
    align-items: center;
    padding-left: 15px;
    flex: none;
}
.menu-items { display: flex; gap: 25.400px; margin-left: 15px; width: 810px; }
.vs-search {
    width: 276px;
    height: 28px;
    background: #fff;
    border: 1px solid #ccced8;
    display: flex;
    align-items: center;
    justify-content: space-between;
    padding: 0 8px 0 5px;
    color: #555;
}
.vs-project {
    width: 84px;
    height: 31px;
    margin-left: 22px;
    line-height: 31px;
    text-align: center;
    background: #dde1e3;
    color: #888;
    font-size: 13.500px;
}
.vs-warn { margin-left: 224px; }
.vs-avatar {
    width: 25px;
    height: 25px;
    margin-left: 9px;
    border-radius: 50%;
    background: #5c2d91;
    color: #fff;
    font-size: 12px;
    line-height: 25px;
    text-align: center;
}
.vs-winbtns { display: flex; gap: 44px; margin-left: 44px; }

.tb {
    height: 31px;
    display: flex;
    align-items: center;
    padding-left: 15px;
    flex: none;
}
.tb-txt { font-size: 13.500px; white-space: nowrap; }
.dim { color: var(--dim); }
.w52 { width: 52px; }
.w58 { width: 58px; }
.w49 { width: 49px; }
.w83 { width: 83px; }
.w102 { width: 102px; }
.w131 { width: 131px; }
.m4 { margin-left: 4px; }
.m5 { margin-left: 5px; }
.m6 { margin-left: 6px; }
.m7 { margin-left: 7px; }
.m8 { margin-left: 8px; }
.m9 { margin-left: 9px; }
.m10 { margin-left: 10px; }
.m11 { margin-left: 11px; }
.m27 { margin-left: 27px; }
.m29 { margin-left: 29px; }
.grip {
    width: 6px;
    height: 25px;
    background: radial-gradient(circle, #a8a9b0 1px, transparent 1.2px) 0 0 / 3px 3px;
    flex: none;
}
.sep { width: 1px; height: 24px; background: #cdced6; flex: none; }
.caret {
    width: 0;
    height: 0;
    flex: none;
    border-left: 4px solid transparent;
    border-right: 4px solid transparent;
    border-top: 4px solid #b4b5bc;
}
.caret.dark { border-top-color: #555; }
.caret.big { border-left-width: 5px; border-right-width: 5px; border-top-width: 7px; border-top-color: #222; }
.overflow {
    width: 8px;
    height: 13px;
    flex: none;
    margin-top: 10px;
    background:
        linear-gradient(#555, #555) 0 0 / 8px 1px no-repeat,
        linear-gradient(135deg, #555 50%, transparent 50%) -1px 5px / 5px 5px no-repeat,
        linear-gradient(225deg, #555 50%, transparent 50%) 4px 5px / 5px 5px no-repeat;
}
.overflow.low { margin-top: 12px; }
.combo {
    height: 27px;
    flex: none;
    border: 1px solid #cdced6;
    display: flex;
    align-items: center;
    justify-content: space-between;
    padding: 0 5px 0 5px;
    color: var(--dim);
    font-size: 13.500px;
}
.cb-debug { width: 81px; }
.cb-x64 { width: 138px; }
.cb-process { width: 249px; background: #fff; color: #1e1e1e; }
.cb-thread { width: 250px; justify-content: flex-end; }
.cb-frame { width: 300px; justify-content: flex-end; }
.preview {
    width: 89px;
    height: 32px;
    line-height: 32px;
    background: #cdd0dc;
    color: #5b606c;
    font-weight: 700;
    font-size: 13.500px;
    text-align: center;
}

.vs-main { flex: 1; display: flex; min-height: 0; }
.vs-panes { width: 1680px; padding-top: 14px; }
.vs-top { display: flex; gap: 10px; height: 953px; padding-left: 10px; }

.editor { width: 1277px; display: flex; flex-direction: column; }
.doc-tabs {
    display: flex;
    height: 28px;
    border-bottom: 3px solid #0e70c0;
    flex: none;
    font-size: 14px;
}
.doc-tab {
    display: flex;
    align-items: center;
    white-space: nowrap;
    padding-left: 6px;
    background: #e3e3e5;
    height: 25px;
}
.pin {
    width: 8px;
    height: 14px;
    flex: none;
    border: 2px solid #666;
    border-bottom: none;
    border-top-width: 3px;
    background: linear-gradient(#666, #666) 1px 6px / 2px 8px no-repeat;
    transform: scale(.8);
}
.pin.white { border-color: #fff; background-image: linear-gradient(#fff, #fff); transform: rotate(90deg) scale(.7); }
.dt-a { width: 134px; }
.dt-a .pin { margin-left: 14px; }
.dt-b { width: 113px; }
.dt-b .pin { margin-left: 15px; }
.dt-c { width: 175px; }
.dt-open { width: 181px; background: #1c8ee3; color: #fff; }
.dt-open .pin { margin-left: 15px; }
.dt-main { width: 126px; background: #0e6ab8; color: #fff; }
.dt-main .pin { margin-left: 14px; }
.xmark { font-size: 22px; font-weight: 400; line-height: 1; margin-left: 8px; }
.xmark.dark { color: #222; }
.doc-tail { margin-left: auto; display: flex; align-items: center; gap: 14px; padding-right: 1px; height: 25px; }

.nav-bar { height: 25px; display: flex; flex: none; font-size: 14px; background: #d5d6de; }
.nav-drop {
    display: flex;
    align-items: center;
    background: #fff;
    height: 24px;
    white-space: nowrap;
}
.nd-project { width: 415px; padding: 0 6px; }
.nd-project span { margin-left: 2px; }
.nd-project .caret { margin-left: auto; }
.nd-scope { width: 835px; margin-left: 5px; padding-left: 25px; padding-right: 5px; }
.nd-fn { margin-left: 320px; }
.nd-scope .caret { margin-left: auto; }
.nav-split { margin-left: 2px; }

.code-pane { flex: 1; display: flex; background: #fff; min-height: 0; position: relative; }
.code-margin { width: 31px; background: #e6e7e8; flex: none; }
.code {
    flex: 1;
    font-family: var(--mono);
    font-size: 22.700px;
    line-height: 31px;
    color: #000;
}
.ln { height: 31px; white-space: pre; }
.no {
    display: inline-block;
    width: 85.500px;
    padding-right: 16px;
    text-align: right;
    color: #2b91af;
}
.kw { color: #0000ff; }
.mac { color: #8a2be2; }
.code-scroll { width: 22px; background: #f5f5f5; flex: none; display: flex; flex-direction: column; align-items: center; }
.up-arrow {
    margin-top: 8px;
    border-left: 6px solid transparent;
    border-right: 6px solid transparent;
    border-bottom: 7px solid #9a9aa6;
}
.code-thumb { width: 13px; height: 300px; margin-top: 42px; background: #c2c3c9; }
.zoom-strip { height: 17px; flex: none; line-height: 17px; font-size: 13px; padding-left: 1px; color: #333; background: #f5f5f5; }

.path-tip {
    position: absolute;
    left: 2182px;
    top: 141px;
    width: 469px;
    height: 31px;
    padding: 2px 0 0 8px;
    background: rgba(240, 240, 242, .42);
    border: 1px solid #c2c3c9;
    color: #9a9ba1;
    font-size: 14px;
    white-space: nowrap;
    overflow: hidden;
}

.diag {
    flex: 1;
    display: flex;
    flex-direction: column;
    background: #f5f5f5;
    border: 1px solid #cdced6;
    border-bottom: none;
}
.diag-head {
    height: 31px;
    flex: none;
    display: flex;
    align-items: center;
    padding-left: 5px;
    background: var(--vs-bg);
    font-size: 14px;
}
.diag-head .dots {
    width: 187px;
    height: 7px;
    margin-left: 11px;
    background: radial-gradient(circle, #b8b9c2 .8px, transparent 1px) 0 0 / 2.500px 2.500px;
}
.diag-head .caret { margin-left: 9px; }
.diag-head .pin { margin-left: 11px; }
.diag-head .xmark { margin-left: 11px; }
.diag-tools {
    height: 28px;
    flex: none;
    display: flex;
    align-items: center;
    padding-left: 13px;
    background: var(--vs-bg);
}
.diag-tools > :nth-child(2) { margin-left: 14px; }
.diag-tools > :nth-child(3) { margin-left: 8px; }
.diag-tools > :nth-child(4) { margin-left: 15px; }
.diag-tools > :nth-child(5) { margin-left: 8px; }
.diag-tools > :nth-child(6) { margin-left: 15px; }
.diag-tools > :nth-child(7) { margin-left: 15px; }
.diag-session {
    height: 28px;
    flex: none;
    line-height: 27px;
    padding-left: 13px;
    font-size: 14.500px;
    color: #111;
    border-bottom: 1px solid #cdced6;
}
.diag-ruler {
    height: 28px;
    flex: none;
    display: flex;
    padding-left: 40px;
    background: #fff;
    border-bottom: 1px solid #cdced6;
}
.rbar { width: 6px; background: #222; }
.rmark {
    padding-left: 3px;
    border-left: 1px solid #cdced6;
    font-size: 12.500px;
    color: #555;
    line-height: 22px;
    background: linear-gradient(#bbb, #bbb) 32px bottom / 1px 6px no-repeat,
                linear-gradient(#bbb, #bbb) 64px bottom / 1px 6px no-repeat,
                linear-gradient(#bbb, #bbb) 96px bottom / 1px 6px no-repeat,
                linear-gradient(#bbb, #bbb) 128px bottom / 1px 6px no-repeat;
}
.rm-a { width: 159px; margin-left: 12px; }
.rm-b { width: 121px; }
.diag-events {
    height: 27px;
    flex: none;
    display: flex;
    align-items: center;
    padding-left: 8px;
    font-size: 14px;
    background: var(--vs-bg);
}
.tri-open {
    width: 0;
    height: 0;
    margin-right: 5px;
    border-left: 9px solid transparent;
    border-bottom: 9px solid #666;
}
.diag-scale { flex: 1; background: #fff; padding-left: 345px; font-size: 13.500px; color: #333; }
.sc-a { margin-top: 54px; height: 20px; line-height: 20px; }
.sc-b { margin-top: 48px; height: 20px; line-height: 20px; }
.sc-c { margin-top: 25px; height: 20px; line-height: 20px; }
.sc-d { margin-top: 47px; height: 20px; line-height: 20px; }
.sc-line { height: 1px; background: #d5d6de; margin-left: -345px; }
.thick { height: 4px; margin-top: 24px; background: #dcdcdf; }
.l1 { margin-top: 30px; height: 3px; }
.l2 { margin-top: 28px; }
.l3 { margin-top: 35px; }
.l4 { margin-top: 28px; }
.l5 { margin-top: 71px; }
.l6 { margin-top: 28px; }

.dock { display: flex; gap: 8px; padding-left: 9px; margin-top: 8px; }
.dock-col { display: flex; flex-direction: column; }
.dock-left { width: 828px; }
.dock-right { width: 835px; }
.dock-pane {
    height: 237px;
    background: #f5f5f5;
    border: 1px solid #cdced6;
    border-top: none;
    font-size: 13.500px;
}
.dock-head { height: 31px; line-height: 31px; padding-left: 4px; background: var(--vs-bg); }
.dock-search { height: 26px; line-height: 26px; padding-left: 4px; background: #fff; color: #666; }
.dock-icons { height: 31px; display: flex; align-items: center; justify-content: flex-end; gap: 6px; padding-right: 5px; background: var(--vs-bg); }
.dock-icons .xmark { margin-left: 0; }
.dock-find { height: 58px; display: flex; align-items: center; justify-content: flex-end; gap: 4px; padding-right: 8px; }
.dock-tabs {
    height: 25px;
    display: flex;
    align-items: center;
    gap: 14px;
    padding-left: 7px;
    font-size: 14.200px;
    white-space: nowrap;
}
.dock-tabs .active {
    height: 25px;
    margin: 0 -6px;
    padding: 0 6px;
    line-height: 24px;
    background: #f5f5f5;
    color: #0e70c0;
    border: 1px solid #cdced6;
    border-top: none;
}
.side-tabs { flex: 1; padding-top: 14px; }
.side-tab {
    writing-mode: vertical-rl;
    font-family: "DejaVu Sans", sans-serif;
    font-size: 13px;
    color: #444;
    padding-left: 4px;
    background: linear-gradient(#d0d3de, #d0d3de) right top / 7px 100% no-repeat;
}
.st-a { height: 115px; }
.st-b { height: 90px; margin-top: 14px; }

.statusbar {
    height: 31px;
    flex: none;
    display: flex;
    align-items: center;
    padding-left: 7px;
    background: #ca5100;
    color: #fff;
    font-size: 14.500px;
    border-bottom: 1px solid #dca680;
    white-space: nowrap;
}
.st-ready { margin-left: 11px; }
.st-right { margin-left: auto; display: flex; align-items: center; }
.st-a1 { margin-left: 5px; width: 150px; }
.st-a2 { margin-left: 8px; width: 118px; }
.up-caret {
    margin-left: 6px;
    border-left: 4px solid transparent;
    border-right: 4px solid transparent;
    border-bottom: 6px solid #fff;
}
.st-dia { margin-left: 38px; }
.st-bell { position: relative; margin-left: 36px; width: 20px; }
.st-bell b {
    position: absolute;
    right: -1px;
    bottom: -5px;
    width: 14px;
    height: 14px;
    border-radius: 50%;
    background: #fff;
    color: #111;
    font-size: 11px;
    font-weight: 400;
    line-height: 14px;
    text-align: center;
}
.resize-grip {
    width: 12px;
    height: 12px;
    margin: 12px 3px 0 24px;
    background: radial-gradient(circle, #e8b490 .8px, transparent 1px) 0 0 / 3px 3px;
}

/* ---------- taskbar ---------- */
.taskbar {
    height: 60px;
    display: flex;
    align-items: center;
    background: linear-gradient(90deg, #e6f0f8 0, #d9e2f2 40%, #d6dcef 55%, #cfe2f4 62%, #d7ddef 78%, #e3eef7 100%);
    border-top: 1px solid #b9c0ca;
}
.task-icons { display: flex; margin-left: 1473px; }
.task-slot {
    position: relative;
    width: 55px;
    height: 48px;
    display: flex;
    align-items: center;
    justify-content: center;
}
.task-slot.on { background: #eef3fc; border-radius: 5px; box-shadow: 3px 0 0 #e6edf8; width: 45px; margin: 0 5px; }
.task-bar, .task-dot {
    position: absolute;
    left: 50%;
    bottom: 1px;
    border-radius: 2px;
    transform: translateX(-50%);
}
.task-bar { width: 20px; height: 3px; background: #0067c0; }
.task-dot { width: 7px; height: 3px; background: #6c7078; bottom: 0; }
.chrome-logo {
    width: 28px;
    height: 28px;
    border-radius: 50%;
    display: flex;
    align-items: center;
    justify-content: center;
    background: conic-gradient(#ea4335 0 70deg, #fbbc05 70deg 190deg, #34a853 190deg 300deg, #ea4335 300deg);
}
.chrome-logo i {
    width: 13px;
    height: 13px;
    border-radius: 50%;
    background: #4285f4;
    border: 2px solid #fff;
    box-sizing: content-box;
}
.tg-badge {
    position: absolute;
    top: 5px;
    right: 1px;
    height: 14px;
    padding: 0 3px;
    border-radius: 6px;
    background: #7b7b7e;
    color: #eee;
    font-size: 10px;
    line-height: 14px;
}
.tray { margin-left: auto; display: flex; align-items: center; padding-right: 19px; }
.tr-mic { margin-left: 24px; }
.tr-lang { margin-left: 22px; font-size: 12.500px; color: #222; width: 30px; }
.tr-net { margin-left: 15px; }
.tr-vol { margin-left: 13px; }
.tr-clock {
    width: 80px;
    margin-left: 15px;
    display: flex;
    flex-direction: column;
    align-items: flex-end;
    font-size: 12.500px;
    line-height: 19px;
    color: #222;
}
.tr-badge {
    width: 20px;
    height: 20px;
    margin-left: 10px;
    border-radius: 50%;
    background: #0067c0;
    color: #fff;
    font-size: 12px;
    font-weight: 400;
    line-height: 20px;
    text-align: center;
}

/* ---------- sdl window ---------- */
.sdl {
    position: absolute;
    left: 1755px;
    top: 259px;
    width: 1602px;
    height: 938px;
    background: #738c99;
    border-radius: 8px 8px 3px 3px;
    box-shadow: 0 20px 56px rgba(0, 0, 0, .3);
    font-family: var(--mono);
    font-size: 14.550px;
    color: var(--im-text);
}
.sdl-title {
    height: 39px;
    display: flex;
    align-items: center;
    padding-left: 10px;
    background: #f3f3f3;
    border-radius: 8px 8px 0 0;
    font-family: var(--ui);
    font-size: 14px;
    color: #8a8a8a;
}
.sdl-title span { margin-left: 8px; }
.sdl-btns { margin-left: auto; display: flex; gap: 44px; padding-right: 26px; }
.im-win {
    position: absolute;
    background: #13161a;
    border: 1px solid #46525f;
}
.im-title {
    height: 23px;
    display: flex;
    align-items: center;
    padding-left: 8px;
    background: #050506;
    color: #c9ccd0;
}
.plot-title { background: var(--im-blue); }
.im-tri {
    width: 0;
    height: 0;
    margin-right: 7px;
    border-left: 6px solid transparent;
    border-right: 6px solid transparent;
    border-top: 11px solid #fff;
}
.im-grip {
    position: absolute;
    right: 0;
    bottom: 0;
    width: 0;
    height: 0;
    border-left: 16px solid transparent;
    border-bottom: 16px solid var(--im-blue);
}
.plot-win { left: 8px; top: 54px; width: 1058px; height: 873px; }
.plot-body { padding: 9px 9px 0 8px; display: flex; flex-direction: column; gap: 5px; }
.plot-frame { background: var(--im-frame); }
.main-win { left: 1070px; top: 54px; width: 526px; height: 229px; }
.dev-win { left: 1067px; top: 290px; width: 525px; height: 352px; }
.im-body { padding: 9px 9px; }
.im-row { display: flex; gap: 5px; height: 24px; margin-bottom: 5px; align-items: center; }
.im-field {
    height: 24px;
    line-height: 24px;
    background: var(--im-frame);
    text-align: center;
    position: relative;
}
.f-r, .f-g { width: 100px; }
.f-b { width: 102px; }
.im-swatch { width: 24px; height: 24px; margin-left: 1px; background: #738c99; border: 1px solid #20304c; }
.im-label { margin-left: 1px; }
.im-btn {
    height: 24px;
    padding: 0 6px;
    background: var(--im-blue);
    color: var(--im-text);
    font-family: var(--mono);
    font-size: 14.550px;
}
.im-row .im-btn + .im-btn { margin-left: 5px; }
.s-scale { width: 341px; }
.s-dev { width: 341px; }
.im-knob { position: absolute; top: 2px; bottom: 2px; background: var(--im-knob); }
.k-scale { left: 31px; width: 15px; }
.k-dev { left: 226px; width: 113px; }
.dev-body { padding: 6px 9px; }
.im-line { height: 21.300px; line-height: 21.300px; white-space: pre; }
.dev-slider-row { margin-top: 2px; }
.im-info { margin-top: 21px; line-height: 16.350px; white-space: pre; }
```

FILE: plots.js
```js
// builds the two implot style charts on the sdl window
const NS = "http://www.w3.org/2000/svg";
const ORANGE = "#d69c00";

function el(parent, name, attrs, text) {
    const node = document.createElementNS(NS, name);
    for (const key in attrs) node.setAttribute(key, attrs[key]);
    if (text !== undefined) node.textContent = text;
    parent.appendChild(node);
    return node;
}

function drawFrame(svg, box, id) {
    el(svg, "rect", { x: box.x, y: box.y, width: box.w, height: box.h, fill: "#0f1113" });
    const defs = el(svg, "defs", {});
    const clip = el(defs, "clipPath", { id });
    el(clip, "rect", { x: box.x, y: box.y, width: box.w, height: box.h });
}

function label(svg, x, y, text, anchor) {
    el(svg, "text", {
        x, y, "text-anchor": anchor,
        "font-family": "Liberation Mono, monospace",
        "font-size": "14.55", fill: "#c9cdd2"
    }, text);
}

function gridLines(svg, box, xTicks, yTicks, xLabelX, labelY, strong) {
    xTicks.forEach(t => {
        el(svg, "path", { d: `M${t.at} ${box.y}V${box.y + box.h}`, stroke: t.strong ? "#44474b" : "#24272b" });
        el(svg, "path", { d: `M${t.at} ${box.y + box.h - 6}V${box.y + box.h}`, stroke: "#5c6068" });
        label(svg, t.at, labelY, t.text, "middle");
    });
    yTicks.forEach(t => {
        el(svg, "path", {
            d: `M${box.x} ${t.at}H${box.x + box.w}`,
            stroke: t.at === strong ? "#3f4246" : "#24272b",
            "stroke-width": t.at === strong ? 2 : 1
        });
        label(svg, xLabelX, t.at + 5, t.text, "end");
    });
}

function axes(svg, box) {
    el(svg, "path", {
        d: `M${box.x} ${box.y}V${box.y + box.h}H${box.x + box.w}`,
        fill: "none", stroke: "#5c6068", "stroke-width": 2
    });
}

function legend(svg, x, y, w, h, text) {
    el(svg, "rect", { x: x + .5, y: y + .5, width: w, height: h, fill: "#0f1113", stroke: "#3a3d42" });
    el(svg, "rect", { x: x + 8, y: y + 8, width: 11, height: 12, fill: "#ffb000" });
    label(svg, x + 22, y + 19, text, "start");
}

// extrema of the recorded signal, read off the picture: [x, y] in plot pixels
const HI = -12;
const extrema = [
    [-6, HI], [16, 293], [33, HI], [51, 279], [67, HI], [85, 271], [101, HI], [118, 265],
    [135, HI], [152, 279], [170, HI], [186, 285], [205, HI], [221, 281], [240, HI], [255, 288],
    [273, HI], [289, 293], [306, HI], [324, 291], [341, HI], [359, 289], [375, HI], [393, 303],
    [408, 0], [427, 316], [443, 8], [462, 320], [477, 14], [496, 310], [512, 5], [528, 305],
    [547, HI], [562, 299], [580, HI], [597, 313], [616, 7], [631, 321], [649, 19], [666, 331],
    [682, 14], [701, 313], [717, HI], [735, 300], [752, HI], [769, 304], [786, 5], [804, 324],
    [820, 15], [839, 326], [856, 18], [872, 327], [889, 21], [905, 330], [924, 17], [939, 330],
    [957, 10], [975, 321]
];

function signalAt(x) {
    for (let i = 0; i < extrema.length - 1; i++) {
        const a = extrema[i], b = extrema[i + 1];
        if (x >= a[0] && x <= b[0]) {
            const t = (x - a[0]) / (b[0] - a[0]);
            return a[1] + (b[1] - a[1]) * (1 - Math.cos(Math.PI * t)) / 2;
        }
    }
    return 0;
}

function drawWave() {
    const svg = document.getElementById("wavePlot");
    const box = { x: 54, y: 12, w: 973, h: 365 };
    drawFrame(svg, box, "waveClip");
    const xTicks = [[101, "0.028"], [270, "0.029"], [440, "0.03"], [609, "0.031"], [778, "0.032"], [949, "0.033"]]
        .map(t => ({ at: t[0], text: t[1], strong: t[1] === "0.03" }));
    const yTicks = [[49, "0.6"], [97, "0.4"], [145, "0.2"], [193, "0"], [242, "-0.2"], [289, "-0.4"], [338, "-0.6"]]
        .map(t => ({ at: t[0], text: t[1] }));
    gridLines(svg, box, xTicks, yTicks, 48, 398, 193);

    // one point per sample at 44100 Hz, about 3.84 px
    let pts = "";
    for (let x = 0; x <= box.w; x += 3.84) {
        pts += `${(box.x + x).toFixed(1)},${(box.y + signalAt(x)).toFixed(1)} `;
    }
    el(svg, "polyline", { points: pts, fill: "none", stroke: ORANGE, "stroke-width": 1.3, "clip-path": "url(#waveClip)" });
    axes(svg, box);
    legend(svg, 67, 25, 142, 28, "Recorded data");
}

function drawSpectrum() {
    const svg = document.getElementById("specPlot");
    const box = { x: 46, y: 13, w: 981, h: 365 };
    drawFrame(svg, box, "specClip");
    const xTicks = [[46, "0"], [268, "5000"], [491, "10000"], [714, "15000"], [936, "20000"]]
        .map(t => ({ at: t[0], text: t[1] }));
    const yTicks = [];
    for (let i = 0; i <= 10; i++) {
        yTicks.push({ at: 378 - i * 36.5, text: i === 10 ? "1" : i === 0 ? "0" : "0." + i });
    }
    gridLines(svg, box, xTicks, yTicks, 40, 398, null);

    // low end clutter, then flat with the one peak near 5 kHz
    const base = 376.5;
    const low = [47, 4, 48, 48, 49, 8, 50, 22, 51, 12, 52, 30, 53, 6, 54, 16, 55, 5, 57, 3, 59, 12, 60, 6, 62, 13, 64, 6, 66, 5, 68, 4, 72, 4, 75, 3, 80, 3, 86, 2, 92, 2, 98, 2, 104, 1];
    let d = `M46 ${base}`;
    for (let i = 0; i < low.length; i += 2) {
        d += `L${low[i]} ${base - low[i + 1]}L${low[i] + .6} ${base - 1}`;
    }
    d += `L258 ${base}L262 ${base - 3}L264 ${base - 10}L265.5 ${base - 268}L267 ${base - 10}L269 ${base - 3}L273 ${base}`;
    d += `L439 ${base}L439 ${base - 4}L440 ${base - 4}L440 ${base}L${box.x + box.w} ${base}`;
    el(svg, "path", { d, fill: "none", stroke: ORANGE, "stroke-width": 1.4, "clip-path": "url(#specClip)" });
    axes(svg, box);
    legend(svg, 59, 25, 97, 29, "Spectrum");
}

drawWave();
drawSpectrum();
```
